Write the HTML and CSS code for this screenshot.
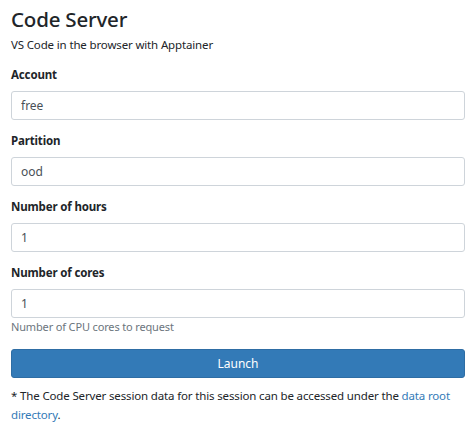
FILE: index.html
```html
<!DOCTYPE html>
<html lang="en">
<head>
    <meta charset="UTF-8">
    <title>Code Server</title>
    <link rel="stylesheet" href="styles.css">
</head>
<body>

<div class="container">
    <h1>Code Server</h1>
    <p class="lead">VS Code in the browser with Apptainer</p>

    <div class="form-group">
        <label for="account">Account</label>
        <input type="text" id="account" value="free">
    </div>

    <div class="form-group">
        <label for="partition">Partition</label>
        <input type="text" id="partition" value="ood">
    </div>

    <div class="form-group">
        <label for="hours">Number of hours</label>
        <input type="text" id="hours" value="1">
    </div>

    <div class="form-group">
        <label for="cores">Number of cores</label>
        <input type="text" id="cores" value="1">
        <small class="help">Number of CPU cores to request</small>
    </div>

    <button type="submit">Launch</button>

    <p class="note">* The Code Server session data for this session can be accessed under the <a href="#">data root directory</a>.</p>
</div>

</body>
</html>
```

FILE: styles.css
```css
body {
    font-family: "Noto Sans", "Open Sans", sans-serif;
    font-size: 11.5px;
    letter-spacing: -0.15px;
    color: #212529;
    margin: 0;
    background-color: #fff;
}
.container {
    padding: 5px 6px 0 11px;
}
h1 {
    font-size: 20.5px;
    font-weight: 500;
    letter-spacing: -0.2px;
    line-height: 28px;
    margin: 0 0 3px 0;
}
.lead {
    margin: 0 0 12px 0;
    line-height: 18px;
}
.form-group {
    margin-bottom: 12px;
}
label {
    display: block;
    font-weight: bold;
    line-height: 18px;
    margin-bottom: 7px;
}
input[type="text"] {
    display: block;
    width: 100%;
    height: 29px;
    padding: 4px 9px;
    box-sizing: border-box;
    border: 1px solid #ced4da;
    border-radius: 3px;
    font-family: inherit;
    font-size: 12px;
    color: #495057;
}
.help {
    display: block;
    color: #6c757d;
    font-size: 11px;
    line-height: 16px;
    margin-top: 1px;
}
.form-group:last-of-type {
    margin-bottom: 14px;
}
button {
    display: block;
    width: 100%;
    height: 29px;
    background-color: #337ab7;
    color: white;
    border: 1px solid #2e6da4;
    border-radius: 3px;
    font-family: inherit;
    font-size: 12px;
}
.note {
    margin: 8px 0 0 0;
    line-height: 19px;
}
a {
    color: #337ab7;
    text-decoration: none;
}
```
